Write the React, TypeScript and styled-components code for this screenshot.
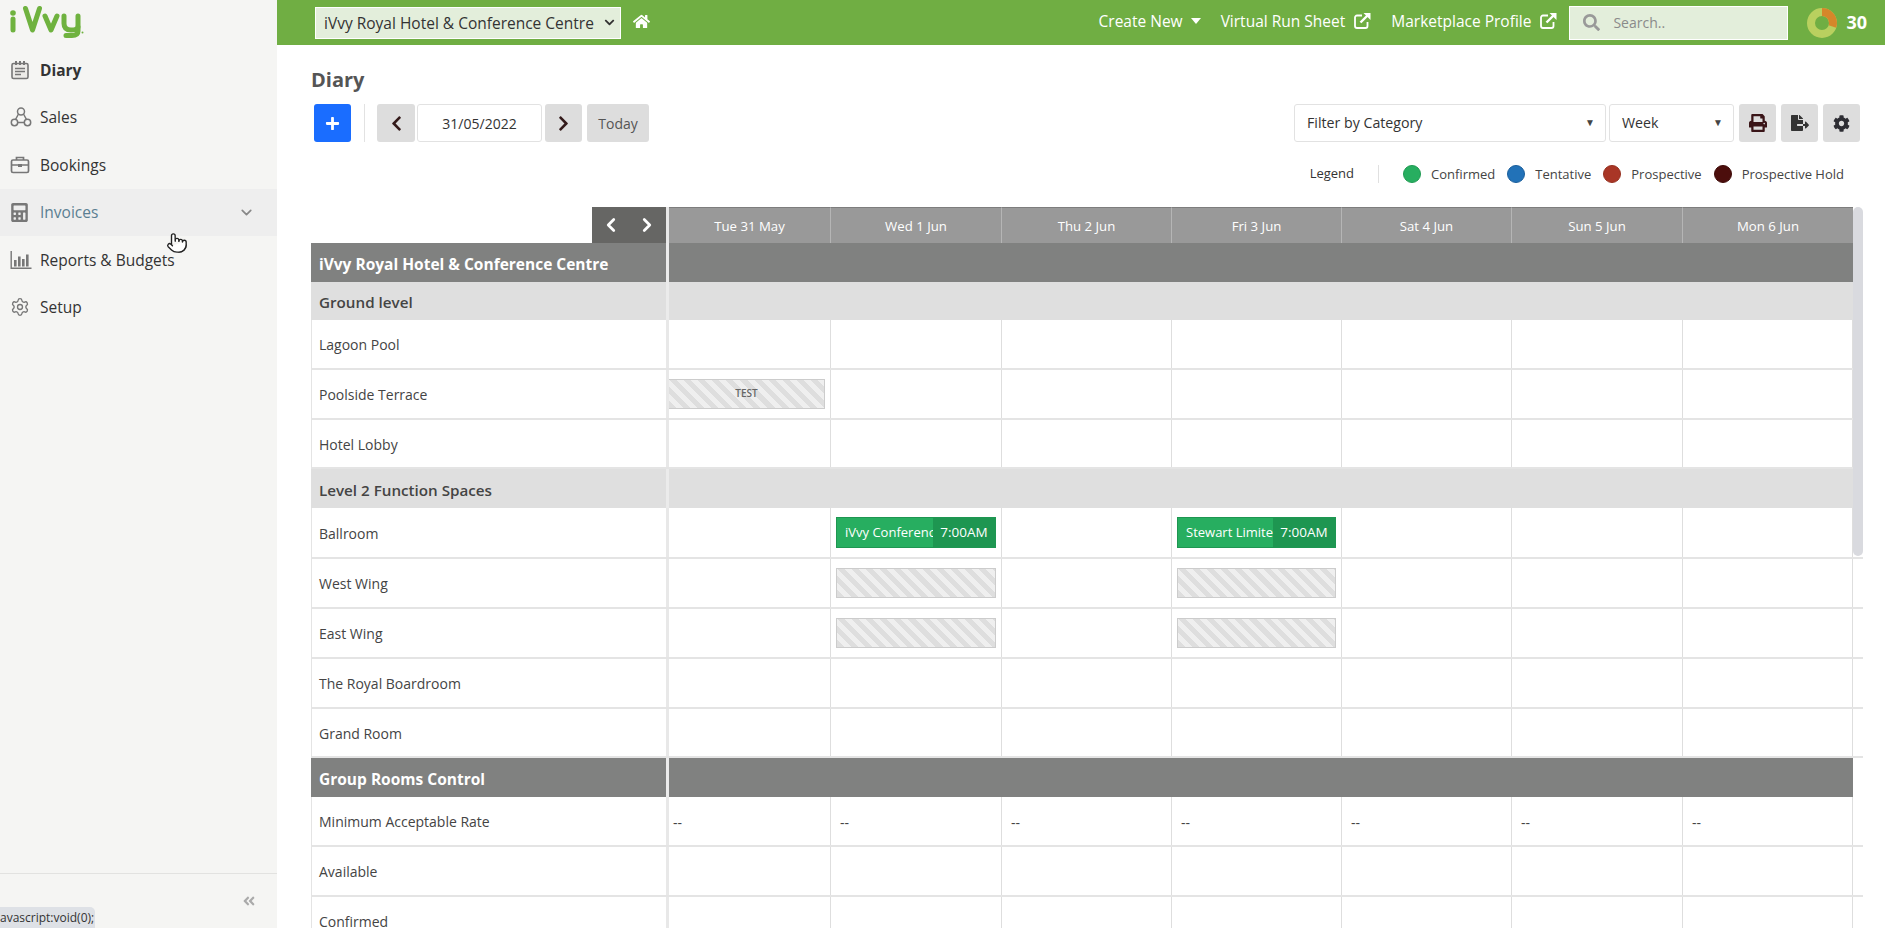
import React from "react";
import styled, { createGlobalStyle } from "styled-components";
import {
  FaChevronDown,
  FaChevronLeft,
  FaChevronRight,
  FaCog,
  FaFileExport,
  FaHome,
  FaPlus,
  FaPrint,
  FaSearch,
  FaAngleDoubleLeft,
  FaCalculator,
} from "react-icons/fa";
import { ChevronDown, ChevronLeft, ChevronRight, Pointer, Settings } from "lucide-react";

const GlobalStyle = createGlobalStyle`
  html, body {
    margin: 0;
    height: 100%;
    overflow: hidden;
    font-family: "Open Sans", "Liberation Sans", sans-serif;
    color: #333;
  }
  * { box-sizing: border-box; }
`;

const COLS = "358px 162px 171px 170px 170px 170px 171px 170px";
const DAYS = ["Tue 31 May", "Wed 1 Jun", "Thu 2 Jun", "Fri 3 Jun", "Sat 4 Jun", "Sun 5 Jun", "Mon 6 Jun"];

type Slot =
  | { kind: "booked"; name: string; time: string }
  | { kind: "hold"; label?: string };

type GridRow =
  | { type: "group"; label: string; height: number }
  | { type: "section"; label: string; height: number }
  | { type: "room"; label: string; height: number; slots?: Record<number, Slot>; dashes?: boolean };

const ROWS: GridRow[] = [
  { type: "group", label: "iVvy Royal Hotel & Conference Centre", height: 39 },
  { type: "section", label: "Ground level", height: 38 },
  { type: "room", label: "Lagoon Pool", height: 50 },
  { type: "room", label: "Poolside Terrace", height: 50, slots: { 0: { kind: "hold", label: "TEST" } } },
  { type: "room", label: "Hotel Lobby", height: 49 },
  { type: "section", label: "Level 2 Function Spaces", height: 39 },
  {
    type: "room",
    label: "Ballroom",
    height: 51,
    slots: {
      1: { kind: "booked", name: "iVvy Conference", time: "7:00AM" },
      3: { kind: "booked", name: "Stewart Limited", time: "7:00AM" },
    },
  },
  { type: "room", label: "West Wing", height: 50, slots: { 1: { kind: "hold" }, 3: { kind: "hold" } } },
  { type: "room", label: "East Wing", height: 50, slots: { 1: { kind: "hold" }, 3: { kind: "hold" } } },
  { type: "room", label: "The Royal Boardroom", height: 50 },
  { type: "room", label: "Grand Room", height: 49 },
  { type: "group", label: "Group Rooms Control", height: 39 },
  { type: "room", label: "Minimum Acceptable Rate", height: 50, dashes: true },
  { type: "room", label: "Available", height: 50 },
  { type: "room", label: "Confirmed", height: 50 },
];

const LEGEND = [
  { label: "Confirmed", color: "#27ae60", edge: "#1f9a52" },
  { label: "Tentative", color: "#2272b8", edge: "#1b5f9c" },
  { label: "Prospective", color: "#a93626", edge: "#96301f" },
  { label: "Prospective Hold", color: "#4c0e0c", edge: "#3e0a08" },
];

const DiaryIcon = () => (
  <svg width="20" height="20" viewBox="0 0 20 20" fill="none" stroke="#777" strokeWidth="1.6">
    <rect x="2" y="3.5" width="16" height="15" rx="1.5" fill="#ecebe8" />
    <path d="M6 1v4M10 1v4M14 1v4" strokeWidth="2" />
    <path d="M5 8.5h10M5 11.5h10M5 14.5h6" strokeWidth="1.3" />
  </svg>
);

const SalesIcon = () => (
  <svg width="22" height="22" viewBox="0 0 22 22" fill="none" stroke="#777" strokeWidth="1.5">
    <circle cx="11" cy="5.5" r="3.5" />
    <circle cx="4.500" cy="16.500" r="3.200" />
    <circle cx="17.500" cy="16.500" r="3.200" />
    <path d="M8.500 8L5.500 13.500M13.500 8l3 5.500M7.700 16.500h6.600" />
  </svg>
);

const BriefcaseIcon = () => (
  <svg width="20" height="20" viewBox="0 0 20 20" fill="none" stroke="#777" strokeWidth="1.7">
    <rect x="1.500" y="5" width="17" height="12.500" rx="1.500" />
    <path d="M6.500 5V2.500h7V5M1.500 10h17" />
    <rect x="8" y="9" width="4" height="3" fill="#777" stroke="none" />
  </svg>
);

const BarsIcon = () => (
  <svg width="22" height="20" viewBox="0 0 22 20" fill="#777">
    <path d="M0.500 1h1.400v16.500h19.600v1.400H0.500z" />
    <rect x="4" y="10" width="2.600" height="6.500" />
    <rect x="8" y="6.500" width="2.600" height="10" />
    <rect x="12" y="9" width="2.600" height="7.500" />
    <rect x="16" y="4.500" width="2.600" height="12" />
  </svg>
);

const ExternalIcon = () => (
  <svg width="18" height="18" viewBox="0 0 18 18" fill="none" stroke="#fff" strokeWidth="1.800">
    <path d="M9 3.500H4a2 2 0 0 0-2 2v8.500a2 2 0 0 0 2 2h8.500a2 2 0 0 0 2-2V10" />
    <path d="M7.500 10.500L14.500 3.500" strokeWidth="2.400" />
    <path d="M10.500 1H17.500V8z" fill="#fff" stroke="none" />
  </svg>
);

const NAV = [
  { label: "Diary", icon: <DiaryIcon />, active: true },
  { label: "Sales", icon: <SalesIcon /> },
  { label: "Bookings", icon: <BriefcaseIcon /> },
  { label: "Invoices", icon: <FaCalculator size={19} color="#777" />, hover: true },
  { label: "Reports & Budgets", icon: <BarsIcon /> },
  { label: "Setup", icon: <Settings size={20} color="#777" strokeWidth={1.6} /> },
];

const Logo = () => (
  <svg width="90" height="40" viewBox="0 0 90 40" fill="none" stroke="#6fb23f" strokeWidth="5" strokeLinecap="round" strokeLinejoin="round">
    <circle cx="13" cy="13" r="2.800" fill="#6fb23f" stroke="none" />
    <path d="M13 19v11" />
    <path d="M25.500 8.500l7 21.500L39.500 8.500" />
    <path d="M45 16l6 14 6-14" />
    <path d="M64 16v7.500c0 5 3 6.500 7 6.500s7-1 7-3" />
    <path d="M78 16v15c0 3.500-2.500 4.500-6 4.500h-6" />
    <circle cx="82.500" cy="32.500" r="1" fill="#6fb23f" stroke="none" />
  </svg>
);

const Donut = () => {
  const r = 11;
  const circumference = 2 * Math.PI * r;
  return (
    <svg width="30" height="30" viewBox="0 0 30 30" fill="none" strokeWidth="8">
      <circle cx="15" cy="15" r={r} stroke="#b9d05f" />
      <circle
        cx="15"
        cy="15"
        r={r}
        stroke="#d5872a"
        strokeDasharray={`${circumference * 0.3} ${circumference}`}
        transform="rotate(-90 15 15)"
      />
    </svg>
  );
};

const App = () => {
  return (
    <Page>
      <GlobalStyle />
      <Sidebar>
        <LogoArea>
          <Logo />
        </LogoArea>
        <Nav>
          {NAV.map((item) => (
            <NavItem key={item.label} $hover={item.hover}>
              <NavIcon>{item.icon}</NavIcon>
              <NavLabel $active={item.active} $hover={item.hover}>
                {item.label}
              </NavLabel>
              {item.hover && <ChevronDown size={17} color="#888" strokeWidth={2.4} />}
            </NavItem>
          ))}
        </Nav>
        <SideFooter>
          <FaAngleDoubleLeft size={14} color="#aaa" />
        </SideFooter>
      </Sidebar>

      <Main>
        <TopBar>
          <HotelSelect>
            iVvy Royal Hotel &amp; Conference Centre
            <FaChevronDown size={11} color="#333" />
          </HotelSelect>
          <HomeLink>
            <FaHome size={17} />
          </HomeLink>
          <TopLinks>
            <TopLink>
              Create New <Caret />
            </TopLink>
            <TopLink>
              Virtual Run Sheet <ExternalIcon />
            </TopLink>
            <TopLink>
              Marketplace Profile <ExternalIcon />
            </TopLink>
          </TopLinks>
          <SearchBox>
            <FaSearch size={17} color="#999" />
            <SearchInput placeholder="Search.." />
          </SearchBox>
          <Score>
            <Donut />
            <ScoreValue>30</ScoreValue>
          </Score>
        </TopBar>

        <Content>
          <Title>Diary</Title>
          <Toolbar>
            <ToolGroup>
              <PlusButton>
                <FaPlus size={15} />
              </PlusButton>
              <ToolSeparator />
              <GreyButton $width={38}>
                <FaChevronLeft size={17} />
              </GreyButton>
              <DateField>31/05/2022</DateField>
              <GreyButton $width={37}>
                <FaChevronRight size={17} />
              </GreyButton>
              <TodayButton>Today</TodayButton>
            </ToolGroup>
            <ToolGroup>
              <FakeSelect $width={312} $tight>
                Filter by Category <SelectArrow>▼</SelectArrow>
              </FakeSelect>
              <FakeSelect $width={125}>
                Week <SelectArrow>▼</SelectArrow>
              </FakeSelect>
              <IconButton>
                <FaPrint size={18} color="#3a1518" />
              </IconButton>
              <IconButton>
                <FaFileExport size={18} color="#333" />
              </IconButton>
              <IconButton>
                <FaCog size={17} color="#2d2d33" />
              </IconButton>
            </ToolGroup>
          </Toolbar>

          <LegendBar>
            <LegendTitle>Legend</LegendTitle>
            <LegendDivider />
            {LEGEND.map((l) => (
              <LegendItem key={l.label}>
                <LegendDot $color={l.color} $edge={l.edge} />
                {l.label}
              </LegendItem>
            ))}
          </LegendBar>

          <GridWrap>
            <GridHead>
              <NavCorner>
                <NavBox>
                  <ChevronLeft size={22} strokeWidth={3} />
                  <ChevronRight size={22} strokeWidth={3} />
                </NavBox>
              </NavCorner>
              {DAYS.map((d) => (
                <DayHead key={d}>{d}</DayHead>
              ))}
            </GridHead>

            {ROWS.map((row) =>
              row.type === "room" ? (
                <RoomRow key={row.label} style={{ height: row.height }}>
                  <RoomLabel>{row.label}</RoomLabel>
                  {DAYS.map((d, i) => (
                    <DayCell key={d} $flush={i === 0}>
                      {row.dashes && <Dashes>--</Dashes>}
                      {row.slots?.[i]?.kind === "hold" && (
                        <HoldBar $flush={i === 0}>{(row.slots[i] as { label?: string }).label}</HoldBar>
                      )}
                      {row.slots?.[i]?.kind === "booked" && (
                        <BookedBar>
                          <BookedName>{(row.slots[i] as { name: string }).name}</BookedName>
                          <BookedTime>{(row.slots[i] as { time: string }).time}</BookedTime>
                        </BookedBar>
                      )}
                    </DayCell>
                  ))}
                </RoomRow>
              ) : (
                <BandRow key={row.label} style={{ height: row.height }}>
                  <BandLabel $group={row.type === "group"}>{row.label}</BandLabel>
                  <BandFill $group={row.type === "group"} />
                </BandRow>
              )
            )}
            <ScrollThumb />
          </GridWrap>
        </Content>
      </Main>

      <StatusTip>avascript:void(0);</StatusTip>
      <HandCursor>
        <Pointer size={22} fill="#fff" color="#222" strokeWidth={1.5} />
      </HandCursor>
    </Page>
  );
};

export default App;

const Page = styled.div`
  display: flex;
  height: 100vh;
  overflow: hidden;
  position: relative;
  background: #fff;
`;

const Sidebar = styled.aside`
  width: 277px;
  flex-shrink: 0;
  display: flex;
  flex-direction: column;
  background: #f5f5f3;
`;

const LogoArea = styled.div`
  height: 46px;
  flex-shrink: 0;
`;

const Nav = styled.nav`
  flex: 1;
`;

const NavItem = styled.div<{ $hover?: boolean }>`
  height: 47.5px;
  display: flex;
  align-items: center;
  padding: 0 22px 0 10px;
  background: ${(p) => (p.$hover ? "#eeeeee" : "transparent")};
`;

const NavIcon = styled.span`
  width: 30px;
  display: flex;
  align-items: center;
`;

const NavLabel = styled.span<{ $active?: boolean; $hover?: boolean }>`
  flex: 1;
  font-size: 15.5px;
  font-weight: ${(p) => (p.$active ? 700 : 400)};
  color: ${(p) => (p.$hover ? "#5b7f92" : "#333")};
`;

const SideFooter = styled.div`
  height: 55px;
  flex-shrink: 0;
  border-top: 1px solid #e2e2e0;
  display: flex;
  justify-content: flex-end;
  align-items: center;
  padding: 0 21px 0 0;
`;

const Main = styled.main`
  flex: 1;
  min-width: 0;
  display: flex;
  flex-direction: column;
`;

const TopBar = styled.header`
  height: 45px;
  flex-shrink: 0;
  background: #70ae43;
  display: flex;
  align-items: center;
  padding: 0 18px 0 38px;
  color: #fff;
`;

const HotelSelect = styled.div`
  width: 306px;
  height: 32px;
  background: #e3eedb;
  border: 1px solid #fff;
  color: #333;
  font-size: 15.5px;
  display: flex;
  align-items: center;
  justify-content: space-between;
  padding: 0 5px 0 8px;
  white-space: nowrap;
`;

const HomeLink = styled.span`
  margin: -3px 0 0 12px;
  display: flex;
`;

const TopLinks = styled.div`
  margin: -3px 0 0 auto;
  display: flex;
  align-items: center;
  gap: 20px;
  font-size: 15.5px;
`;

const TopLink = styled.span`
  display: flex;
  align-items: center;
  gap: 8px;
  white-space: nowrap;
`;

const Caret = styled.span`
  width: 0;
  height: 0;
  border-left: 5px solid transparent;
  border-right: 5px solid transparent;
  border-top: 6px solid #fff;
`;

const SearchBox = styled.div`
  width: 219px;
  height: 34px;
  margin-left: 12px;
  background: #e3eedb;
  border: 1px solid #fff;
  display: flex;
  align-items: center;
  gap: 11px;
  padding-left: 13px;
`;

const SearchInput = styled.input`
  flex: 1;
  min-width: 0;
  border: 0;
  background: transparent;
  font: 14px "Open Sans", sans-serif;
  outline: none;
  &::placeholder {
    color: #8a8a8a;
    opacity: 1;
  }
`;

const Score = styled.div`
  display: flex;
  align-items: center;
  gap: 9px;
  margin-left: 19px;
`;

const ScoreValue = styled.span`
  font-size: 18px;
  font-weight: 700;
  margin-top: -2px;
`;

const Content = styled.div`
  flex: 1;
  min-height: 0;
  overflow: hidden;
  padding: 21px 25px 0 34px;
`;

const Title = styled.h1`
  margin: 0;
  font-size: 20px;
  line-height: 28px;
  font-weight: 700;
  color: #555;
`;

const Toolbar = styled.div`
  margin-top: 10px;
  padding-left: 3px;
  display: flex;
  justify-content: space-between;
`;

const ToolGroup = styled.div`
  display: flex;
  align-items: stretch;
  height: 38px;
  gap: 5px;
`;

const PlusButton = styled.button`
  width: 37px;
  border: 0;
  border-radius: 3px;
  background: #1a6dff;
  color: #fff;
  display: flex;
  align-items: center;
  justify-content: center;
  padding: 0;
`;

const ToolSeparator = styled.span`
  width: 1px;
  background: #e2e2e2;
  margin: 0 7px 0 8px;
`;

const GreyButton = styled.button<{ $width: number }>`
  width: ${(p) => p.$width}px;
  border: 0;
  border-radius: 3px;
  background: #dddddd;
  color: #331a1a;
  display: flex;
  align-items: center;
  justify-content: center;
  padding: 0;
`;

const DateField = styled.div`
  width: 125px;
  margin-left: -3px;
  margin-right: -2px;
  border: 1px solid #e2e2e2;
  border-radius: 3px;
  background: #fff;
  font-size: 14px;
  color: #333;
  display: flex;
  align-items: center;
  justify-content: center;
`;

const TodayButton = styled.button`
  width: 62px;
  border: 0;
  border-radius: 3px;
  background: #dddddd;
  color: #555;
  font: 14px "Open Sans", sans-serif;
  padding: 0;
`;

const FakeSelect = styled.div<{ $width: number; $tight?: boolean }>`
  width: ${(p) => p.$width}px;
  margin-right: ${(p) => (p.$tight ? "-2px" : "0")};
  border: 1px solid #e2e2e2;
  border-radius: 3px;
  background: #fff;
  font-size: 14.2px;
  color: #333;
  display: flex;
  align-items: center;
  justify-content: space-between;
  padding: 0 10px 2px 12px;
`;

const SelectArrow = styled.span`
  font-size: 10px;
  color: #444;
`;

const IconButton = styled.button`
  width: 37px;
  border: 0;
  border-radius: 3px;
  background: #dddddd;
  display: flex;
  align-items: center;
  justify-content: center;
  padding: 0;
`;

const LegendBar = styled.div`
  margin-top: 23px;
  padding-right: 16px;
  height: 18px;
  display: flex;
  align-items: center;
  justify-content: flex-end;
  gap: 12px;
  font-size: 13px;
  color: #444;
`;

const LegendTitle = styled.span`
  color: #333;
  margin-top: -2px;
`;

const LegendDivider = styled.span`
  width: 1px;
  height: 18px;
  background: #e0e0e0;
  margin: 0 12px;
`;

const LegendItem = styled.span`
  display: flex;
  align-items: center;
  gap: 10px;
  white-space: nowrap;
`;

const LegendDot = styled.span<{ $color: string; $edge: string }>`
  width: 18px;
  height: 18px;
  border-radius: 50%;
  background: ${(p) => p.$color};
  border: 1px solid ${(p) => p.$edge};
`;

const GridWrap = styled.div`
  position: relative;
  margin: 24px -3px 0 0;
`;

const GridHead = styled.div`
  display: grid;
  grid-template-columns: ${COLS};
  height: 36px;
`;

const NavCorner = styled.div`
  display: flex;
  justify-content: flex-end;
  border-right: 3px solid #e8e8e8;
`;

const NavBox = styled.div`
  width: 74px;
  background: #666664;
  color: #fff;
  display: flex;
  align-items: center;
  justify-content: space-between;
  padding: 0 8px;
`;

const DayHead = styled.div`
  background: #999999;
  border-top: 1px solid #7d7d7d;
  border-right: 1px solid #b5b5b5;
  color: #fff;
  font-size: 13.2px;
  display: flex;
  align-items: center;
  justify-content: center;
  &:last-child {
    border-right: 0;
  }
`;

const BandRow = styled.div`
  display: grid;
  grid-template-columns: 358px 1184px;
`;

const BandLabel = styled.div<{ $group: boolean }>`
  background: ${(p) => (p.$group ? "#808180" : "#dfdfdf")};
  color: ${(p) => (p.$group ? "#fff" : "#444")};
  border-right: 3px solid #ebebeb;
  font-size: ${(p) => (p.$group ? "15.5px" : "15.2px")};
  font-weight: ${(p) => (p.$group ? 700 : 600)};
  display: flex;
  align-items: center;
  padding: 2px 0 0 8px;
`;

const BandFill = styled.div<{ $group: boolean }>`
  background: ${(p) => (p.$group ? "#808180" : "#dfdfdf")};
`;

const RoomRow = styled.div`
  display: grid;
  grid-template-columns: ${COLS};
  border-bottom: 2px solid #e4e4e4;
`;

const RoomLabel = styled.div`
  border-left: 1px solid #e4e4e4;
  border-right: 3px solid #e8e8e8;
  font-size: 14px;
  color: #444;
  display: flex;
  align-items: center;
  padding: 1px 0 0 7px;
`;

const DayCell = styled.div<{ $flush?: boolean }>`
  border-right: 1px solid #dedede;
  display: flex;
  align-items: center;
  padding: 0 5px 0 ${(p) => (p.$flush ? "0" : "5px")};
  min-width: 0;
`;

const Dashes = styled.span`
  font-size: 14px;
  color: #444;
  padding: 3px 0 0 4px;
`;

const HoldBar = styled.div<{ $flush?: boolean }>`
  width: 100%;
  height: 30px;
  border: 1.5px solid #cccccc;
  border-left-width: ${(p) => (p.$flush ? "0" : "1.5px")};
  background: repeating-linear-gradient(45deg, #dedede 0 5px, #efefef 5px 10px);
  color: #666;
  font-size: 10px;
  font-weight: 600;
  display: flex;
  align-items: center;
  justify-content: center;
  padding-bottom: 3px;
`;

const BookedBar = styled.div`
  width: 100%;
  height: 31px;
  display: flex;
  color: #fff;
  font-size: 13.5px;
  background: #27ae60;
  border: 1px solid #1e9651;
`;

const BookedName = styled.span`
  flex: 1;
  min-width: 0;
  overflow: hidden;
  white-space: nowrap;
  padding-left: 8px;
  font-size: 13px;
  line-height: 29px;
`;

const BookedTime = styled.span`
  flex-shrink: 0;
  width: 62px;
  background: #1e9651;
  text-align: center;
  line-height: 29px;
`;

const ScrollThumb = styled.div`
  position: absolute;
  top: 0;
  left: 1542px;
  width: 10px;
  height: 349px;
  border-radius: 5px;
  background: #d9dadf;
`;

const StatusTip = styled.div`
  position: absolute;
  left: 0;
  bottom: 0;
  width: 95px;
  height: 21px;
  background: #dee1e6;
  border-top-right-radius: 5px;
  font-size: 12px;
  line-height: 21px;
  color: #333;
  white-space: nowrap;
`;

const HandCursor = styled.div`
  position: absolute;
  left: 166px;
  top: 232px;
  display: flex;
`;
